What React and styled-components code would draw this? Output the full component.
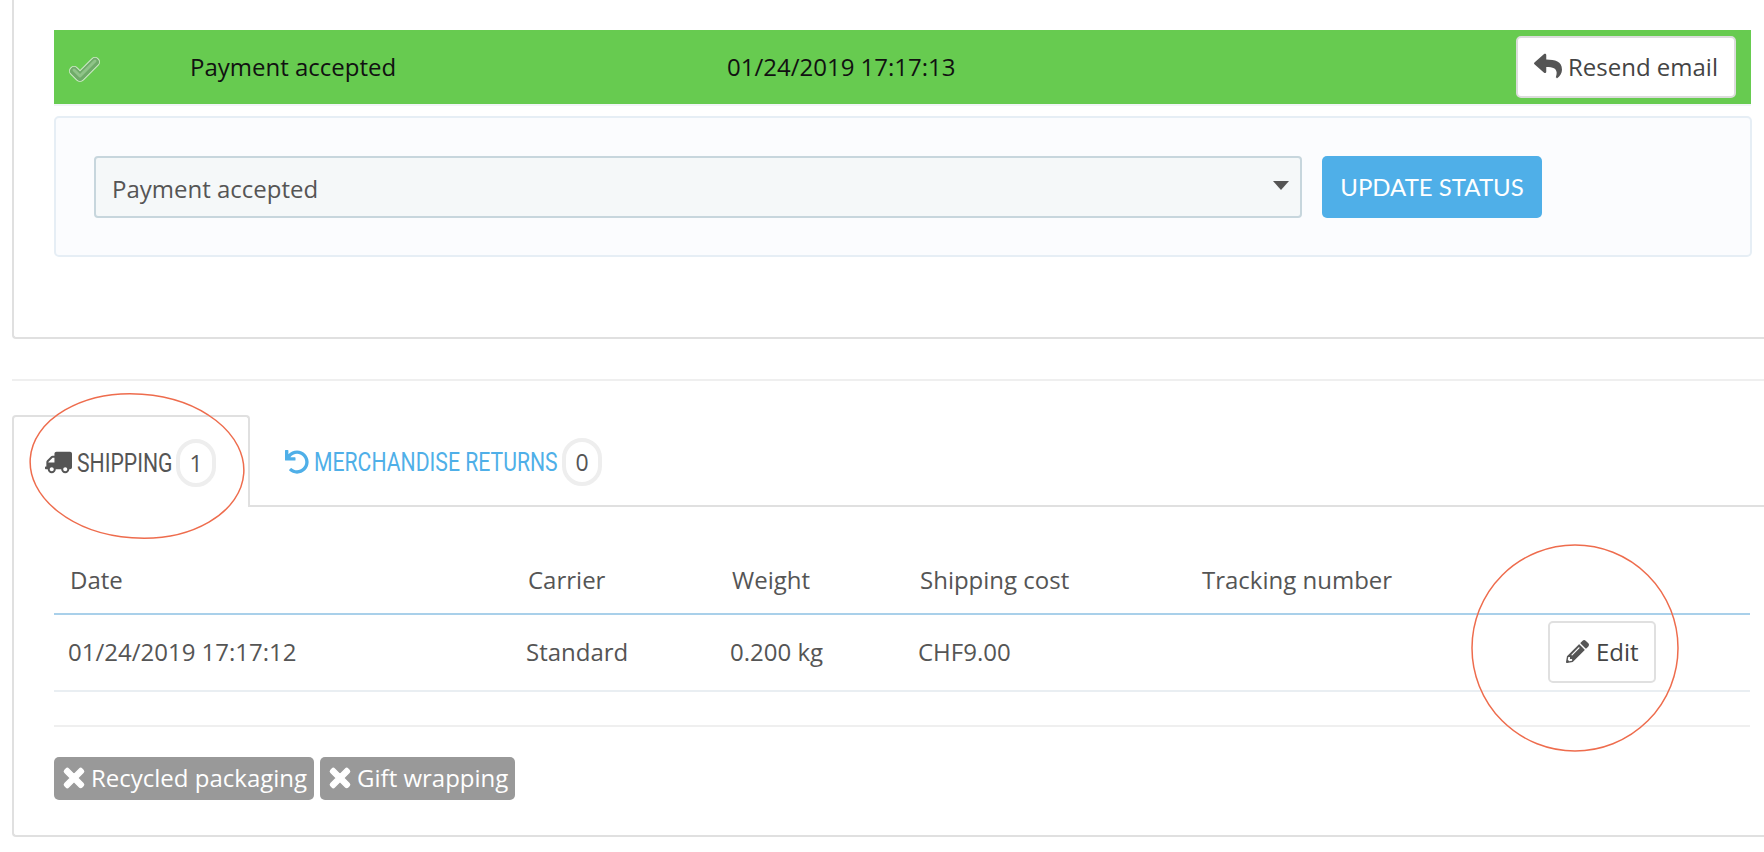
import React from 'react'
import styled, { createGlobalStyle } from 'styled-components'
import { FaReply, FaTruck, FaUndo, FaPencilAlt, FaTimes } from 'react-icons/fa'

const GlobalStyle = createGlobalStyle`
  html, body {
    margin: 0;
    background: #fff;
    color: #555;
    font-family: "Open Sans", "Noto Sans", sans-serif;
    font-size: 24px;
  }
`

const Page = styled.div`
  position: relative;
  width: 1764px;
  height: 852px;
  overflow: hidden;
  padding-left: 12px;
  box-sizing: border-box;
`

const TopCard = styled.section`
  box-sizing: border-box;
  height: 339px;
  padding: 30px 12px 0 40px;
  border-left: 2px solid #e0e0e0;
  border-bottom: 2px solid #e0e0e0;
  border-bottom-left-radius: 4px;
`

const StatusRow = styled.div`
  display: flex;
  align-items: center;
  box-sizing: border-box;
  height: 74px;
  margin-right: 1px;
  padding-bottom: 2px;
  background: #67cb50;
  color: #111;
  box-shadow: 0 2px 0 #f2f5f7;
`

const CheckCell = styled.div`
  display: flex;
  width: 136px;
  padding: 8px 0 0 13px;
  box-sizing: border-box;
`

const StatusName = styled.div`
  width: 537px;
`

const StatusDate = styled.div`
  flex: 1;
`

const ResendButton = styled.button`
  display: flex;
  align-items: center;
  gap: 6px;
  height: 62px;
  margin: 2px 15px 0 0;
  padding: 0 16px 2px;
  background: #fff;
  border: 2px solid #dcdcdc;
  border-radius: 5px;
  color: #444;
  font: inherit;
`

const StatusPanel = styled.div`
  display: flex;
  gap: 20px;
  box-sizing: border-box;
  height: 141px;
  margin-top: 12px;
  padding: 38px 0 0 38px;
  background: #fbfcfe;
  border: 2px solid #e6eef5;
  border-radius: 5px;
`

const SelectBox = styled.div`
  display: flex;
  align-items: center;
  justify-content: space-between;
  box-sizing: border-box;
  width: 1208px;
  height: 62px;
  padding: 3px 11px 0 16px;
  background: #f5f8f9;
  border: 2px solid #c7d6dd;
  border-radius: 4px;
  color: #555;
`

const Caret = styled.span`
  width: 0;
  height: 0;
  margin-bottom: 6px;
  border-left: 8px solid transparent;
  border-right: 8px solid transparent;
  border-top: 9px solid #555;
`

const UpdateButton = styled.button`
  width: 220px;
  height: 62px;
  padding-bottom: 2px;
  background: #4fafe8;
  border: 0;
  border-radius: 5px;
  color: #fff;
  font-family: "Lato", sans-serif;
  font-size: 24px;
  font-weight: 400;
`

const Divider = styled.hr`
  height: 2px;
  margin: 40px 0 0;
  background: #efefef;
  border: 0;
`

const TabBar = styled.div`
  display: flex;
  height: 92px;
  margin-top: 34px;
`

const Tab = styled.div`
  display: flex;
  align-items: center;
  box-sizing: border-box;
  gap: 5px;
  width: ${p => p.$width}px;
  padding: ${p => (p.$active ? 1 : 3)}px 0 0 ${p => p.$pad}px;
  color: ${p => (p.$active ? '#555' : '#4fafe8')};
  border: ${p => (p.$active ? '2px solid #e0e0e0' : '0')};
  border-bottom: ${p => (p.$active ? '0' : '2px solid #e0e0e0')};
  border-radius: ${p => (p.$active ? '4px 4px 0 0' : '0')};
  flex: ${p => (p.$active ? 'none' : 1)};
`

// no condensed face installed, so the label is squeezed into its box
const TabLabel = styled.span`
  display: inline-block;
  width: ${p => p.$width}px;
  font-family: "Roboto", sans-serif;
  font-size: 26px;
  white-space: nowrap;
  transform: scaleX(0.815);
  transform-origin: left center;
`

const Count = styled.span`
  display: flex;
  align-items: center;
  justify-content: center;
  box-sizing: border-box;
  width: 40px;
  height: 48px;
  border: 4px solid #eee;
  border-radius: 20px;
  color: #555;
  font-family: "Open Sans", sans-serif;
  font-size: 23px;
`

const BottomCard = styled.section`
  box-sizing: border-box;
  height: 330px;
  padding: 0 14px 0 40px;
  border-left: 2px solid #e0e0e0;
  border-bottom: 2px solid #e0e0e0;
  border-bottom-left-radius: 4px;
`

const ShippingTable = styled.table`
  width: 1696px;
  table-layout: fixed;
  border-collapse: collapse;
`

const HeadCell = styled.th`
  height: 107px;
  padding: 38px 0 0 16px;
  box-sizing: border-box;
  border-bottom: 2px solid #a9d0ea;
  font-weight: 400;
  text-align: left;
`

const BodyCell = styled.td`
  height: 77px;
  padding: 0 0 2px 14px;
  box-sizing: border-box;
  border-bottom: 2px solid #e9eef2;
`

const EditButton = styled.button`
  display: flex;
  align-items: center;
  gap: 7px;
  width: 108px;
  height: 62px;
  margin-left: 34px;
  padding: 0 0 0 16px;
  background: #fff;
  border: 2px solid #e0e0e0;
  border-radius: 5px;
  color: #444;
  font: inherit;
`

const Rule = styled.div`
  height: 2px;
  margin: 33px 0 0;
  width: 1696px;
  background: #efefef;
`

const TagRow = styled.div`
  display: flex;
  gap: 6px;
  margin-top: 30px;
`

const Tag = styled.span`
  display: flex;
  align-items: center;
  gap: 3px;
  height: 43px;
  padding: 0 7px 2px 6px;
  box-sizing: border-box;
  background: #999;
  border-radius: 5px;
  color: #fff;

  svg {
    stroke: #fff;
    stroke-width: 24;
  }
`

const Annotation = styled.svg`
  position: absolute;
  left: 0;
  top: 0;
  pointer-events: none;
`

const columns = [458, 204, 188, 282, 314, 250]

export default function App() {
  return (
    <Page>
      <GlobalStyle />
      <TopCard>
        <StatusRow>
          <CheckCell>
            <svg width="34" height="30" viewBox="0 0 34 30" fill="none" strokeLinejoin="round" strokeLinecap="round">
              <path d="M7 16l6 6L28 7" stroke="#cfe8c8" strokeWidth="10" />
              <path d="M7 16l6 6L28 7" stroke="#6fab69" strokeWidth="8" />
              <path d="M7 15l6 6L28 6" stroke="#8fc488" strokeWidth="3" />
            </svg>
          </CheckCell>
          <StatusName>Payment accepted</StatusName>
          <StatusDate>01/24/2019 17:17:13</StatusDate>
          <ResendButton>
            <FaReply size={28} color="#555" />
            Resend email
          </ResendButton>
        </StatusRow>
        <StatusPanel>
          <SelectBox>
            Payment accepted
            <Caret />
          </SelectBox>
          <UpdateButton>UPDATE STATUS</UpdateButton>
        </StatusPanel>
      </TopCard>
      <Divider />
      <TabBar>
        <Tab $active $width={238} $pad={31}>
          <FaTruck size={27} style={{ transform: 'scaleX(-1)' }} />
          <TabLabel $width={94}>SHIPPING</TabLabel>
          <Count>1</Count>
        </Tab>
        <Tab $pad={35}>
          <FaUndo size={24} />
          <TabLabel $width={243}>MERCHANDISE RETURNS</TabLabel>
          <Count>0</Count>
        </Tab>
      </TabBar>
      <BottomCard>
        <ShippingTable>
          <colgroup>
            {columns.map((w, i) => <col key={i} width={w} />)}
          </colgroup>
          <thead>
            <tr>
              <HeadCell>Date</HeadCell>
              <HeadCell>Carrier</HeadCell>
              <HeadCell>Weight</HeadCell>
              <HeadCell>Shipping cost</HeadCell>
              <HeadCell>Tracking number</HeadCell>
              <HeadCell />
            </tr>
          </thead>
          <tbody>
            <tr>
              <BodyCell>01/24/2019 17:17:12</BodyCell>
              <BodyCell>Standard</BodyCell>
              <BodyCell>0.200 kg</BodyCell>
              <BodyCell>CHF9.00</BodyCell>
              <BodyCell />
              <BodyCell>
                <EditButton>
                  <FaPencilAlt size={23} color="#555" />
                  Edit
                </EditButton>
              </BodyCell>
            </tr>
          </tbody>
        </ShippingTable>
        <Rule />
        <TagRow>
          <Tag><FaTimes size={28} />Recycled packaging</Tag>
          <Tag><FaTimes size={28} />Gift wrapping</Tag>
        </TagRow>
      </BottomCard>
      <Annotation width="1764" height="852" fill="none" stroke="#ee6c4d" strokeWidth="1.5">
        <ellipse cx="137" cy="466" rx="107" ry="72" transform="rotate(4 137 466)" />
        <ellipse cx="1575" cy="648" rx="103" ry="103" />
      </Annotation>
    </Page>
  )
}
